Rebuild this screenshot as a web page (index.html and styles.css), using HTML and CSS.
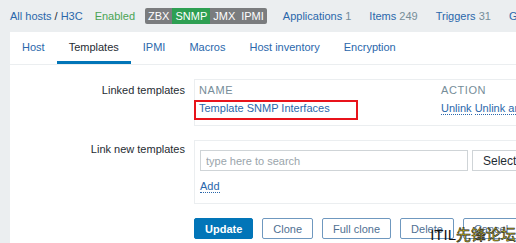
FILE: index.html
```html
<!DOCTYPE html>
<html lang="en">
<head>
  <meta charset="UTF-8" />
  <title>Hosts - H3C</title>
  <link rel="stylesheet" href="styles.css">
</head>
<body>
  <div class="host-bar">
    <a class="crumb" href="#">All hosts</a><span class="sep">/</span><a class="crumb" href="#">H3C</a>
    <span class="status">Enabled</span>
    <div class="tags">
      <span class="tag">ZBX</span><span class="tag on">SNMP</span><span class="tag">JMX</span><span class="tag">IPMI</span>
    </div>
    <a class="count" href="#">Applications <span>1</span></a>
    <a class="count" href="#">Items <span>249</span></a>
    <a class="count" href="#">Triggers <span>31</span></a>
    <a class="count" href="#">Graphs <span>8</span></a>
  </div>

  <div class="panel">
    <ul class="tabs">
      <li>Host</li>
      <li class="active">Templates</li>
      <li>IPMI</li>
      <li>Macros</li>
      <li>Host inventory</li>
      <li>Encryption</li>
    </ul>

    <div class="form">
      <div class="label">Linked templates</div>
      <div class="field box linked">
        <table>
          <tr><th class="col-name">NAME</th><th>ACTION</th></tr>
          <tr>
            <td class="col-name"><span class="marked"><a href="#">Template SNMP Interfaces</a></span></td>
            <td class="actions"><a class="dotted" href="#">Unlink</a> <a class="dotted" href="#">Unlink and clear</a></td>
          </tr>
        </table>
      </div>

      <div class="label second">Link new templates</div>
      <div class="field box newlink">
        <div class="search-row">
          <input type="text" placeholder="type here to search">
          <button class="select">Select</button>
        </div>
        <a class="dotted add" href="#">Add</a>
      </div>

      <div></div>
      <div class="buttons">
        <button class="btn primary">Update</button>
        <button class="btn">Clone</button>
        <button class="btn">Full clone</button>
        <button class="btn">Delete</button>
        <button class="btn">Cancel</button>
      </div>
    </div>
  </div>

  <div class="watermark">ITIL<span>先锋论坛</span></div>
</body>
</html>
```

FILE: styles.css
```css
html, body {
  margin: 0;
  padding: 0;
  height: 100vh;
  overflow: hidden;
  background: #ebeef0;
  font-family: "Liberation Sans", Arial, sans-serif;
  font-size: 11px;
  color: #1f2c33;
}

a {
  color: #2a67ab;
  text-decoration: none;
}

.host-bar {
  height: 31px;
  display: flex;
  align-items: center;
  padding-left: 10px;
  white-space: nowrap;
}

.sep {
  margin: 0 3px;
  color: #1f2c33;
}

.status {
  color: #4aa454;
  margin-left: 12px;
}

.tags {
  display: flex;
  margin-left: 10px;
  margin-right: 16px;
}

.tag {
  background: #7a7c7e;
  color: #fff;
  padding: 1px 3px;
  height: 14px;
  line-height: 14px;
}

.tag:first-child { border-radius: 2px 0 0 2px; }
.tag:last-child { border-radius: 0 2px 2px 0; }

.tag.on {
  background: #2d9f52;
}

.count {
  margin-right: 18px;
}

.count span {
  color: #768d99;
}

.panel {
  margin-left: 10px;
  margin-top: 1px;
  background: #fff;
  height: 300px;
  width: 700px;
}

.tabs {
  list-style: none;
  margin: 0;
  padding: 0;
  display: flex;
  height: 33px;
  border-bottom: 1px solid #ebeef0;
  box-sizing: border-box;
}

.tabs li {
  padding: 0 12px;
  line-height: 30px;
  color: #2a67ab;
  border-bottom: 3px solid transparent;
}

.tabs li.active {
  color: #1f2c33;
  border-bottom-color: #0275b8;
}

.form {
  display: grid;
  grid-template-columns: 175px 1fr;
  column-gap: 9px;
  row-gap: 14px;
  padding-top: 14px;
}

.label {
  text-align: right;
  padding-top: 5px;
}

.label.second {
  padding-top: 3px;
}

.box {
  border: 1px solid #ebeef0;
  width: 420px;
  box-sizing: border-box;
}

.linked {
  height: 47px;
  padding: 3px 4px;
}

table {
  border-collapse: collapse;
  width: 100%;
}

th {
  text-align: left;
  font-weight: normal;
  color: #768d99;
  letter-spacing: 0.6px;
  padding: 1px 0 6px;
}

td {
  padding: 0;
}

.col-name {
  width: 242px;
}

.marked {
  position: relative;
}

.marked::after {
  content: "";
  position: absolute;
  left: -5px;
  top: -2px;
  width: 160px;
  height: 16px;
  border: 2px solid #e8131b;
}

.dotted {
  border-bottom: 1px dotted #2a67ab;
}

.actions {
  white-space: nowrap;
}

.newlink {
  height: 64px;
  padding: 9px 0 0 5px;
}

.search-row {
  display: flex;
  gap: 4px;
}

.search-row input {
  width: 268px;
  height: 21px;
  box-sizing: border-box;
  border: 1px solid #cfd4d7;
  padding: 0 5px;
  font: inherit;
}

.search-row input::placeholder {
  color: #9aa5ab;
}

.select {
  height: 21px;
  padding: 0 10px;
  border: 1px solid #cfd4d7;
  background: #fff;
  font: inherit;
  font-size: 12px;
  color: #1f2c33;
}

.add {
  display: inline-block;
  margin-top: 9px;
}

.buttons {
  display: flex;
  gap: 9px;
}

.btn {
  height: 21px;
  padding: 0 10px;
  border: 1px solid #6f98bf;
  border-radius: 2px;
  background: #fff;
  color: #4f7092;
  font: inherit;
}

.btn.primary {
  background: #0275b8;
  border-color: #0275b8;
  color: #fff;
  font-weight: bold;
}

.watermark {
  position: absolute;
  right: 0;
  bottom: -1px;
  font-size: 15px;
  color: #111;
  font-family: "Liberation Sans", "Noto Sans CJK SC", sans-serif;
}

.watermark span {
  color: #f1e21c;
  -webkit-text-stroke: 0.6px #222;
}
```
